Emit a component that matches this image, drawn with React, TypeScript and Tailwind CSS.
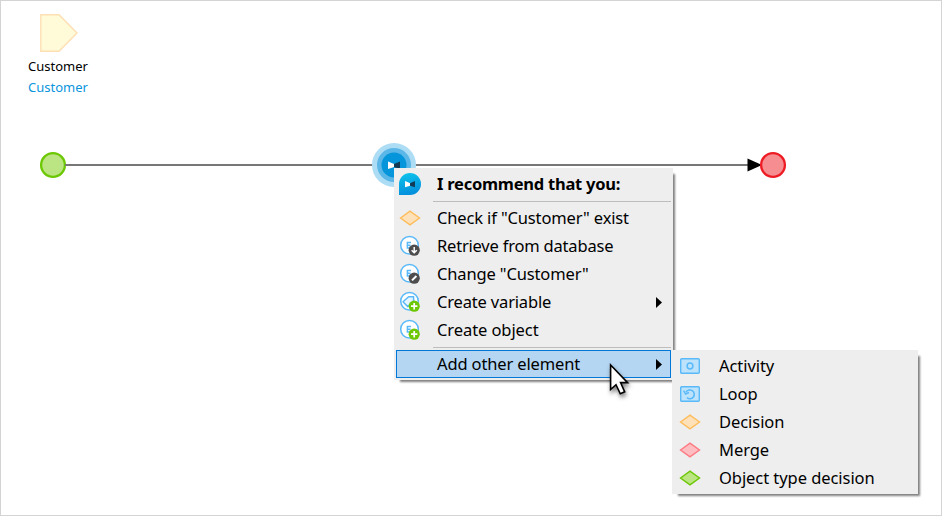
import React from "react";

const BADGE_DARK = "#4d4d4d";
const BADGE_GREEN = "#6cc704";

function BowTie() {
  return (
    <>
      <path d="M0 0.5 L6.2 3 V6 L0 8 Z" fill="#fff" />
      <path d="M12 0.5 L6 3 V6 L12 8 Z" fill="#123a55" />
    </>
  );
}

function Assistant() {
  return (
    <svg width="22" height="22" viewBox="0 0 22 22">
      <defs>
        <linearGradient id="drop" x1="0" y1="0" x2="0.2" y2="1">
          <stop offset="0" stopColor="#0cc6ec" />
          <stop offset="1" stopColor="#0590dc" />
        </linearGradient>
      </defs>
      <path d="M0 22V11A11 11 0 1 1 11 22Z" fill="url(#drop)" />
      <g transform="translate(6 7.7) scale(.83)"><BowTie /></g>
    </svg>
  );
}

function Diamond({ stroke, fill }: { stroke: string; fill: string }) {
  return (
    <svg width="22" height="16" viewBox="0 0 22 16">
      <path d="M1.5 8L11 1.2L20.5 8L11 14.8Z" fill={fill} stroke={stroke} strokeWidth="1.4" />
    </svg>
  );
}

function Entity({ badge, letter = true }: { badge: "down" | "edit" | "plus"; letter?: boolean }) {
  return (
    <svg width="22" height="22" viewBox="0 0 22 22" fill="none">
      <circle cx="10.5" cy="10.3" r="8.8" fill="#fff" stroke="#5ab9f8" strokeWidth="1.5" />
      {letter ? (
        <path d="M12 7.5H8.4V13H12M8.4 10.2H11.6" stroke="#5ab9f8" strokeWidth="1.5" />
      ) : (
        <path d="M4 10.8L9.6 5.8H14.6V10.5L8.6 15.6Z" fill="#e6f5ff" stroke="#5ab9f8" strokeWidth="1.5" strokeLinejoin="round" />
      )}
      <circle cx="15.2" cy="15.2" r="5.6" fill={badge === "plus" ? BADGE_GREEN : BADGE_DARK} />
      {badge === "plus" && <path d="M15.2 12V18.4M12 15.2H18.4" stroke="#fff" strokeWidth="1.7" />}
      {badge === "down" && <path d="M15.2 12V17.6M12.6 15.2L15.2 17.8L17.8 15.2" stroke="#fff" strokeWidth="1.5" />}
      {badge === "edit" && <path d="M13 17.4L17.4 13" stroke="#fff" strokeWidth="2" />}
    </svg>
  );
}

function Box({ loop = false }: { loop?: boolean }) {
  return (
    <svg width="20" height="16" viewBox="0 0 20 16" fill="none" stroke="#5ab9f8">
      <rect x=".7" y=".7" width="18.6" height="14.6" rx="1" fill="#bde3fc" strokeWidth="1.4" />
      {loop ? (
        <>
          <path d="M6 6.2A4.4 4.4 0 1 1 7 11.7" strokeWidth="1.6" />
          <path d="M3.6 4.6L5.5 8L9 6.5" strokeWidth="1.4" />
        </>
      ) : (
        <circle cx="10" cy="8" r="2.9" strokeWidth="1.5" />
      )}
    </svg>
  );
}

function Arrow() {
  return (
    <svg width="6" height="11" viewBox="0 0 6 11">
      <path d="M0 0L6 5.5L0 11Z" />
    </svg>
  );
}

type ItemProps = { icon?: React.ReactNode; label: string; text?: string; more?: boolean; active?: boolean };

function Item({ icon, label, text = "ml-[15px] tracking-[-0.14px]", more, active }: ItemProps) {
  return (
    <div
      className={`flex h-7 items-center border pr-2 ${
        active ? "border-[#0078d7] bg-[#b4d6f2]" : "border-transparent"
      }`}
    >
      <span className="flex w-[25px] shrink-0 justify-center">{icon}</span>
      <span className={`flex-1 leading-7 whitespace-nowrap ${text}`}>{label}</span>
      {more && <Arrow />}
    </div>
  );
}

function Separator() {
  return <div className="ml-[37px] h-px bg-[#bdbdbd]" />;
}

const panel = "absolute bg-[#eeeeee] shadow-[4px_4px_2px_-2px_#808080]";
const subText = "ml-[17px] tracking-[-0.06px]";

export default function App() {
  return (
    <main className="relative h-[516px] w-[942px] overflow-hidden border border-[#d4d4d4] bg-white font-['Noto_Sans','Open_Sans',sans-serif] text-[16.5px] text-black">
      <div className="absolute top-[13px] left-[17px] flex w-20 flex-col items-center text-[13px] leading-[21px]">
        <svg width="38" height="38" viewBox="0 0 38 38" className="mb-1 ml-[2px]">
          <path d="M.8 .8H19L37 19L19 37.2H.8Z" fill="#fffad7" stroke="#fddfb3" strokeWidth="1.4" />
        </svg>
        <span>Customer</span>
        <span className="text-[#0a95dd]">Customer</span>
      </div>

      <svg className="absolute top-[134px] left-[29px]" width="770" height="60" viewBox="30 135 770 60">
        <circle cx="53" cy="165" r="11.9" fill="#bbe583" stroke="#6cc704" strokeWidth="2.3" />
        <path d="M65 165H750" stroke="#777" strokeWidth="2" />
        <path d="M747.5 158.5L762 165L747.5 171.5Z" />
        <circle cx="773" cy="165" r="11.9" fill="#f68d91" stroke="#ed1c24" strokeWidth="2.3" />
        <circle cx="394" cy="165" r="22" fill="#addcf5" />
        <circle cx="394" cy="165" r="17" fill="#5ab7e7" />
        <circle cx="394" cy="165" r="12.5" fill="#0595db" />
        <g transform="translate(388 161)"><BowTie /></g>
      </svg>

      <nav className={`${panel} top-[167px] left-[393px] h-[212px] w-[279px] pt-[2px] pr-[2px] pl-[2px]`}>
        <Item icon={<Assistant />} label={"I recommend that you:"} text="ml-[15px] font-bold tracking-[-0.24px]" />
        <div className="pt-[3px] pb-[2px]"><Separator /></div>
        <Item icon={<Diamond stroke="#fdbd5c" fill="#fee1b8" />} label={'Check if "Customer" exist'} />
        <Item icon={<Entity badge="down" />} label="Retrieve from database" text="ml-[15px] tracking-[-0.2px]" />
        <Item icon={<Entity badge="edit" />} label={'Change "Customer"'} />
        <Item icon={<Entity badge="plus" letter={false} />} label="Create variable" text="ml-[15px] tracking-[-0.17px]" more />
        <Item icon={<Entity badge="plus" />} label="Create object" text="ml-[15px] tracking-[-0.08px]" />
        <div className="pt-[3px] pb-[2px]"><Separator /></div>
        <Item label="Add other element" more active />
      </nav>

      <nav className={`${panel} top-[349px] left-[671px] h-[144px] w-[246px] py-[2px] pl-[4px]`}>
        <Item icon={<Box />} label="Activity" text={subText} />
        <Item icon={<Box loop />} label="Loop" text={subText} />
        <Item icon={<Diamond stroke="#fdbd5c" fill="#fee1b8" />} label="Decision" text={subText} />
        <Item icon={<Diamond stroke="#fc7a82" fill="#febdc1" />} label="Merge" text={subText} />
        <Item icon={<Diamond stroke="#6cc704" fill="#bbe583" />} label="Object type decision" text={subText} />
      </nav>

      <svg
        className="absolute top-[362px] left-[608px] drop-shadow-[1px_3px_2px_rgba(0,0,0,.5)]"
        width="22" height="34" viewBox="0 0 22 34"
      >
        <path d="M1.6 2V26.5L7 21.7L11.3 30.8L15.7 28.8L11.6 19.6H18.6Z" fill="#fff" stroke="#000" strokeWidth="1.6" />
      </svg>
    </main>
  );
}
